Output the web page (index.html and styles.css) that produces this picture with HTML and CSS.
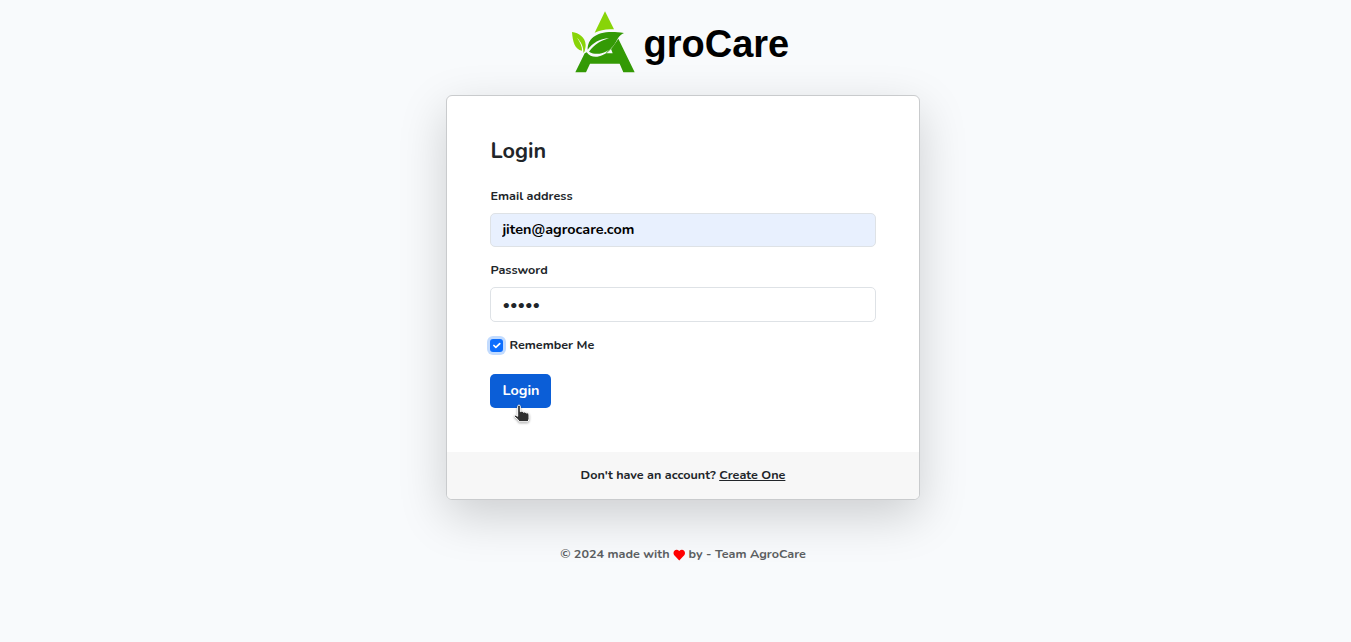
FILE: index.html
```html
<!DOCTYPE html>
<html lang="en">
<head>
<meta charset="utf-8">
<title>AgroCare Login</title>
<link rel="stylesheet" href="styles.css">
</head>
<body>
<main class="page">
  <header class="brand">
    <svg class="brand-mark" viewBox="30 30 198 195" aria-hidden="true">
      <path fill="#88d408" d="M135 34 L162 88 Q130 85 104 98Z"/>
      <path fill="#88d408" d="M36 96 C57 99 76 111 77 135 C77 142 75 148 74 154 L70 159 C72 143 63 124 51 113 C61 128 67 140 66 152 C44 148 38 125 36 96Z"/>
      <path fill="#349a05" fill-rule="evenodd" d="M46 217 L74 160 L80 157 C91 173 112 173 128 165 C150 156 162 135 175 116 L224 217 H190 L179 191 H90 L78 217Z M137 160 H158 L152 144Z"/>
      <path fill="#349a05" d="M83 149 C83 112 115 87 192 99 C175 106 172 121 162 135 C143 160 110 169 87 155 C104 132 122 123 147 114 C119 117 98 128 83 149Z"/>
    </svg>
    <span class="brand-name">groCare</span>
  </header>
  <section class="card">
    <form class="card-body">
      <h1 class="title">Login</h1>
      <label class="label" for="email">Email address</label>
      <input class="input input-email" id="email" type="text" value="jiten@agrocare.com">
      <label class="label label-password" for="password">Password</label>
      <input class="input input-password" id="password" type="password" value="jiten">
      <div class="remember">
        <span class="check"><svg viewBox="0 0 20 20"><path d="M6 10l3 3 6-6"/></svg></span>
        <span class="remember-text">Remember Me</span>
      </div>
      <button class="button" type="button"><span>Login</span>
        <svg class="cursor" viewBox="0 0 51 60" aria-hidden="true"><path d="M14 7 C14 2 22 2 22 7 V23 C27 21 29 22 31 25 C35 23 38 24 39 27 C44 25 48 28 48 33 V43 Q48 48 45 53 H18 Q16 46 9 42 Q3 38 4 35 Q7 31 14 37Z"/></svg>
      </button>
    </form>
    <div class="card-footer"><span class="ask">Don't have an account?</span><a class="create">Create One</a></div>
  </section>
  <footer class="copyright"><span class="made">© 2024 made with</span><svg class="heart" viewBox="0 0 12 12"><path d="M6 11.500 L.8 6 C-1.200 2.600 2.700-1.200 6 2 C9.300-1.200 13.200 2.600 11.200 6Z"/></svg><span class="team">by - Team AgroCare</span></footer>
</main>
</body>
</html>
```
FILE: styles.css
```css
* { box-sizing: border-box; }
body {
  margin: 0;
  background: #f8fafc;
  color: #212529;
  font: 700 12.6px/18px "Nunito", "Open Sans", sans-serif;
}
.page { display: flex; flex-direction: column; align-items: center; height: 642px; padding: 10px 0 0 15px; overflow: hidden; }
.brand { display: flex; width: 219px; height: 85px; margin-right: 7px; }
.brand-mark { flex: none; width: 66px; height: 65px; }
.brand-name { margin: 12px 0 0 7.5px; color: #000; font: bold 38px/45px "Liberation Sans", Arial, sans-serif; white-space: nowrap; }
.card {
  width: 474px; height: 405px; flex: none;
  background: #fff;
  border: 1px solid #c9cbcd;
  border-radius: 6px;
  box-shadow: 0 16px 48px rgba(0, 0, 0, .175);
}
.card-body { display: flex; flex-direction: column; align-items: flex-start; height: 356px; padding: 42px 43px 0; }
.title { margin: 0 0 22px .5px; font-size: 21.6px; line-height: 27px; font-weight: 700; }
.label { height: 18px; margin-bottom: 8px; padding-left: .5px; }
.label-password { margin-top: 14px; }
.input {
  width: 386px; height: 34px; padding: 0 11px 2px 11.4px;
  border: 1px solid #dee2e6; border-radius: 5px;
  background: #fff; color: #000;
  font: 700 14.4px/20px "Nunito", "Open Sans", sans-serif;
}
.input-email { background: #e8f0fe; }
.input-password { height: 35px; color: #212529; }
.remember { display: flex; align-items: center; height: 18px; margin-top: 14px; gap: 6.5px; }
.check { width: 13px; height: 13px; border-radius: 3px; background: #0d6efd; box-shadow: 0 0 0 3px #c2dbfe; }
.check svg { display: block; width: 13px; height: 13px; fill: none; stroke: #fff; stroke-width: 2.6; stroke-linecap: round; stroke-linejoin: round; }
.button {
  position: relative;
  width: 61px; height: 34px; margin-top: 20px; padding: 0 0 2px 1px;
  border: 0; border-radius: 5px;
  background: #0b5ed7; color: #fff;
  font: 700 14.4px/20px "Nunito", "Open Sans", sans-serif;
}
.cursor { position: absolute; left: 23px; top: 30px; width: 17px; height: 20px; fill: #303030; stroke: #fff; stroke-width: 3; filter: drop-shadow(0 1px 1px rgba(0, 0, 0, .35)); }
.card-footer { display: flex; justify-content: center; gap: 3.3px; height: 47px; padding-top: 14px; background: #f7f7f7; border-radius: 0 0 5px 5px; }
.create { text-decoration: underline; }
.copyright { display: flex; align-items: center; height: 18px; margin-top: 45px; color: #5b5e61; white-space: nowrap; }
.heart { width: 12.5px; height: 12px; margin: 2px 3.5px 0 3px; fill: #f00; }
```
